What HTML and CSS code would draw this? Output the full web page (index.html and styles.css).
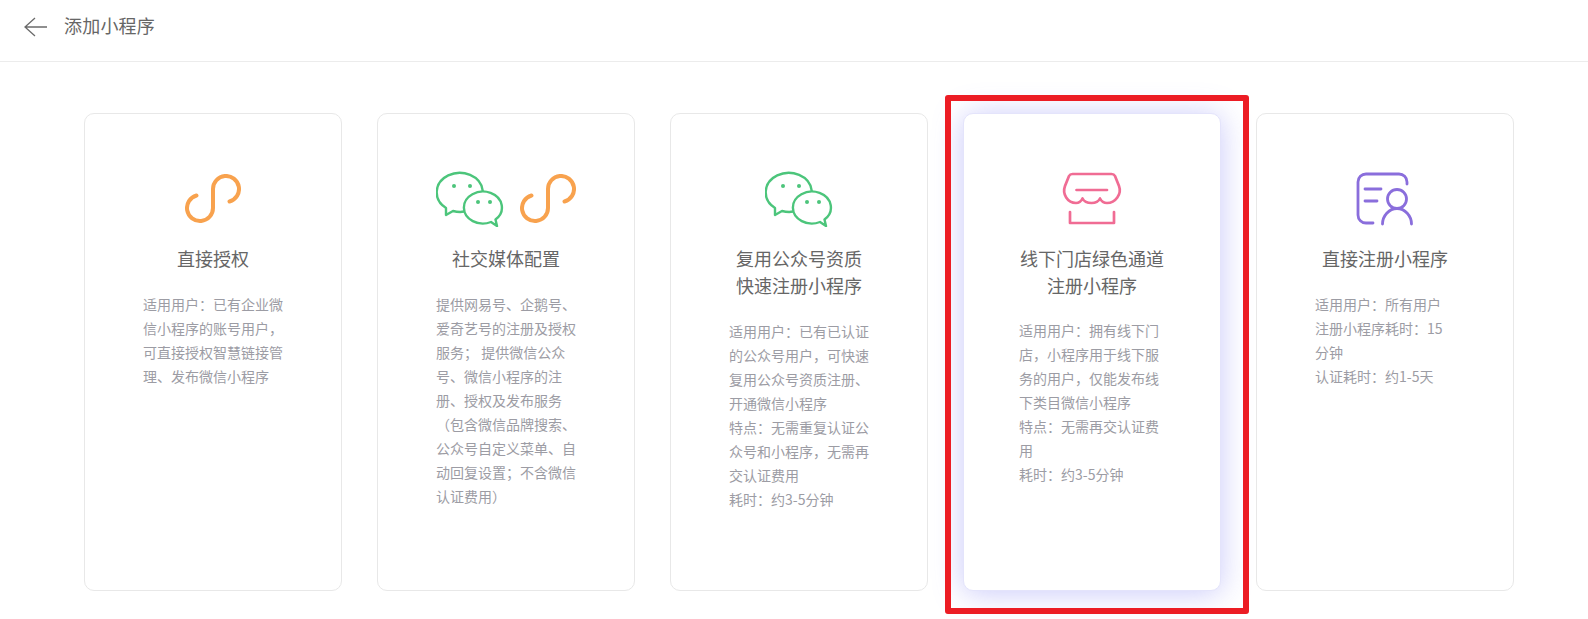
FILE: index.html
```html
<!DOCTYPE html>
<html lang="zh-CN">
<head>
<meta charset="utf-8">
<title>添加小程序</title>
<link rel="stylesheet" href="styles.css">
</head>
<body>
<svg class="defs" width="0" height="0" aria-hidden="true">
  <symbol id="mini" viewBox="0 0 56 50">
    <path class="stroke-mini" d="M11.5 21.5A13 13 0 1 0 28 34V15A13 13 0 1 1 44.5 27.5"/>
  </symbol>
  <symbol id="wechat" viewBox="-1 0 68 56">
    <path class="stroke-wx" d="M9 37A23 19.5 0 1 1 16 40L9 44Z"/>
    <path class="stroke-wx" d="M54 51A19 16 0 1 1 58.5 48.5L60 55Z"/>
    <circle class="dot-wx" cx="17" cy="15" r="2"/>
    <circle class="dot-wx" cx="33" cy="15" r="2"/>
    <circle class="dot-wx" cx="41" cy="31" r="2"/>
    <circle class="dot-wx" cx="53" cy="31" r="2"/>
  </symbol>
</svg>
<header class="topbar">
  <svg class="back" width="24" height="20" viewBox="0 0 24 20"><path d="M23 10H1M11 1L1 10L11 19"/></svg>
  <h1 class="page-title">添加小程序</h1>
</header>
<main class="cards">
  <article class="card">
    <div class="icons"><svg class="i-mini" width="56" height="50"><use href="#mini"/></svg></div>
    <h2 class="card-title">直接授权</h2>
    <p class="desc">适用用户：已有企业微信小程序的账号用户，可直接授权智慧链接管理、发布微信小程序</p>
  </article>
  <article class="card">
    <div class="icons">
      <svg class="i-wx" width="68" height="56"><use href="#wechat"/></svg>
      <svg class="i-mini" width="56" height="50"><use href="#mini"/></svg>
    </div>
    <h2 class="card-title">社交媒体配置</h2>
    <p class="desc">提供网易号、企鹅号、爱奇艺号的注册及授权服务； 提供微信公众号、微信小程序的注册、授权及发布服务（包含微信品牌搜索、公众号自定义菜单、自动回复设置；不含微信认证费用）</p>
  </article>
  <article class="card">
    <div class="icons"><svg class="i-wx" width="68" height="56"><use href="#wechat"/></svg></div>
    <h2 class="card-title">复用公众号资质<br>快速注册小程序</h2>
    <p class="desc">适用用户：已有已认证的公众号用户，可快速复用公众号资质注册、开通微信小程序<br>特点：无需重复认证公众号和小程序，无需再交认证费用<br>耗时：约3-5分钟</p>
  </article>
  <article class="card card-active">
    <div class="icons">
      <svg class="i-shop" width="62" height="56" viewBox="0 0 62 56">
        <path d="M11.5 3H50.5Q53 3 54 5L58 15C61 23 54.5 32 46 32C43 32 40.5 30.5 39 27.5C37.5 30.5 34 32 30.5 32C26.5 32 23 30.5 21.5 27.5C20 30.5 17.5 32 15 32C6.5 32 1 23 4 15L8 5Q9 3 11.5 3Z"/>
        <path d="M15.5 19H46M9 41V52H53V41"/>
      </svg>
    </div>
    <h2 class="card-title">线下门店绿色通道<br>注册小程序</h2>
    <p class="desc">适用用户：拥有线下门店，小程序用于线下服务的用户，仅能发布线下类目微信小程序<br>特点：无需再交认证费用<br>耗时：约3-5分钟</p>
  </article>
  <article class="card">
    <div class="icons">
      <svg class="i-person" width="58" height="54" viewBox="0 0 58 54">
        <path d="M51 12V10A8 8 0 0 0 43 2H10A8 8 0 0 0 2 10V43A8 8 0 0 0 10 51H17"/>
        <path d="M9 17H25M9 29H21"/>
        <circle cx="41" cy="27" r="9.5"/>
        <path d="M26.5 52C26.5 44 33 36.5 41 36.5S55.5 44 55.5 52"/>
      </svg>
    </div>
    <h2 class="card-title">直接注册小程序</h2>
    <p class="desc">适用用户：所有用户<br>注册小程序耗时：15 分钟<br>认证耗时：约1-5天</p>
  </article>
</main>
<div class="highlight"></div>
</body>
</html>
```
FILE: styles.css
```css
* { box-sizing: border-box; }
html, body { margin: 0; padding: 0; height: 100%; overflow: hidden; background: #fff; }
body { font-family: "Noto Sans CJK SC", "Liberation Sans", sans-serif; position: relative; }
.defs { position: absolute; }

.topbar {
  height: 62px;
  display: flex;
  align-items: center;
  gap: 16px;
  padding: 0 0 8px 24px;
  border-bottom: 1px solid #ececec;
}
.back { fill: none; stroke: #6b6b6b; stroke-width: 1.3; }
.page-title { margin: 0 0 2px; font-size: 18px; font-weight: 400; color: #666; line-height: 27px; letter-spacing: 0.2px; }

.cards { display: flex; gap: 35px; padding: 51px 0 0 84px; }
.card {
  width: 258px;
  height: 478px;
  flex: none;
  border: 1px solid #e8e8e8;
  border-radius: 10px;
  background: #fff;
  padding: 56px 0 0;
  display: flex;
  flex-direction: column;
  align-items: center;
}
.card-active { border-color: #e4e4fb; box-shadow: 0 2px 30px rgba(105, 105, 240, 0.36); }

.icons { height: 58px; display: flex; align-items: center; justify-content: center; gap: 16px; }
.icons svg { display: block; }

.stroke-mini { fill: none; stroke: #f8a24e; stroke-width: 4; stroke-linecap: round; }
.stroke-wx { fill: #fff; stroke: #4cc57b; stroke-width: 2.4; stroke-linejoin: round; }
.dot-wx { fill: #4cc57b; }
.i-shop { fill: none; stroke: #f06c94; stroke-width: 2.7; stroke-linecap: round; stroke-linejoin: round; }
.i-person { fill: none; stroke: #8a6edc; stroke-width: 2.8; stroke-linecap: round; }

.card-title {
  margin: 17px 0 0;
  font-size: 18px;
  font-weight: 400;
  line-height: 27px;
  color: #666;
  text-align: center;
}
.desc {
  width: 140px;
  margin: 20px 0 0;
  font-size: 14px;
  line-height: 24px;
  color: #9c9ca4;
}
.card-active .desc { width: 146px; margin-top: 19px; }

.highlight {
  position: absolute;
  left: 945px;
  top: 95px;
  width: 304px;
  height: 519px;
  border: 6px solid #ec1c24;
  border-radius: 3px;
  pointer-events: none;
}
```
